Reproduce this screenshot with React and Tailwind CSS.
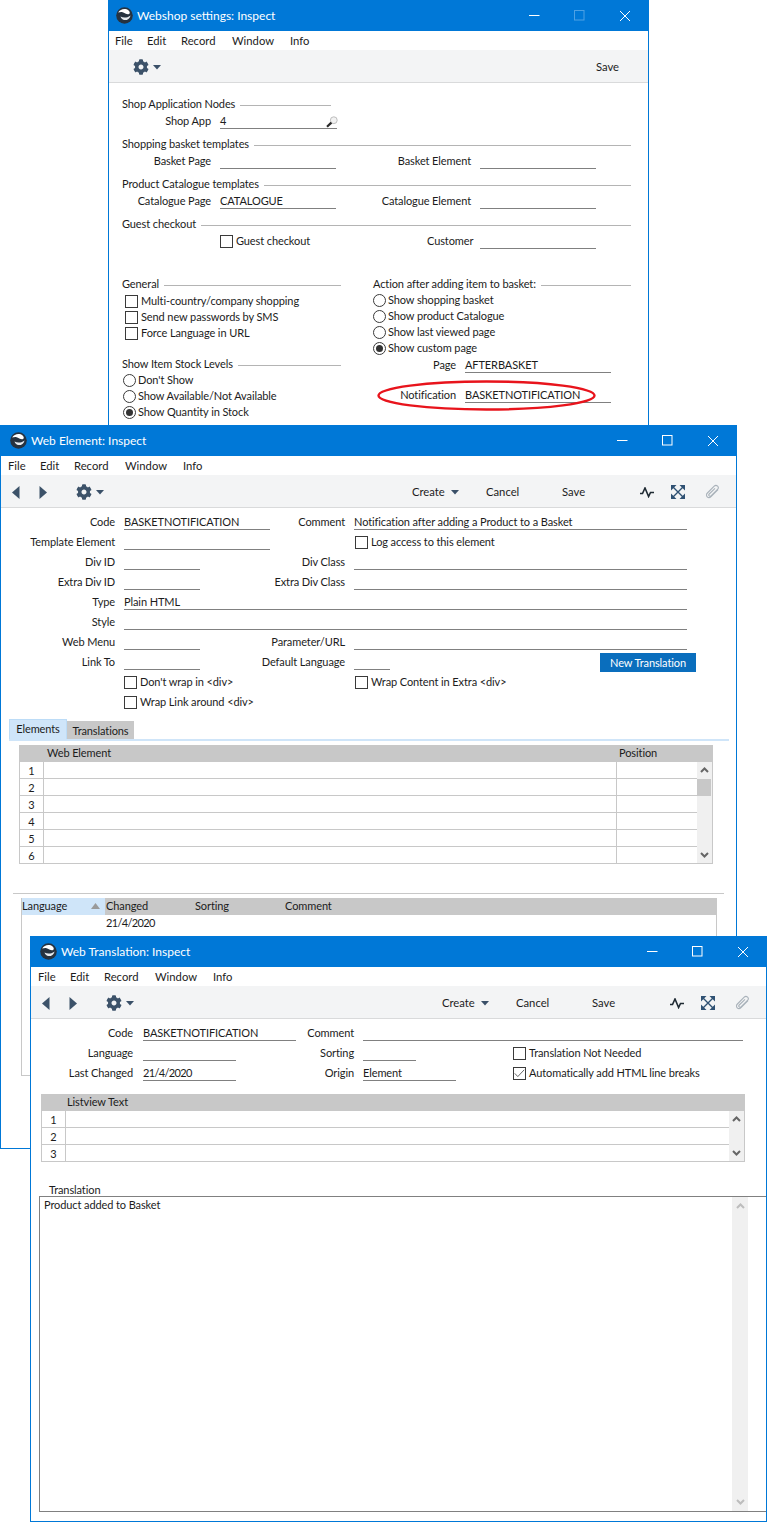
import React from "react";
import { FaCog } from "react-icons/fa";

const FONT = "font-['Lato','Noto_Sans',sans-serif]";

function Logo() {
  return (
    <svg width="17" height="17" viewBox="0 0 17 17" className="shrink-0">
      <circle cx="8.5" cy="8.5" r="8.3" fill="#26323f" />
      <path d="M2.2 5.6C4.2 1.6 9.6 .8 12.6 3.4 14 4.7 14.2 6.2 13 7 11.2 8 8.6 5.6 6.6 5.2 5 4.9 3.4 5.2 2.2 5.6Z" fill="#fff" />
      <path d="M4.5 9.5C7 10.8 10.5 11.4 14.6 8.4 13.8 12 10.6 13.6 8 13 6.4 12.6 5 11.2 4.5 9.5Z" fill="#e6ebef" />
    </svg>
  );
}

function TitleBar({ title, pl, gaps, maxDim }) {
  return (
    <div className={`h-[31px] bg-[#0078d7] flex items-center shrink-0`}>
      <div className={`flex items-center ${pl}`}>
        <Logo />
        <span className="ml-[4px] mt-px text-[12px] tracking-normal text-white leading-none">{title}</span>
      </div>
      <div className={`ml-auto flex items-center ${gaps}`}>
        <svg width="11" height="11" viewBox="0 0 11 11"><path d="M0 5.5H10.5" stroke="#fff" strokeWidth="1" /></svg>
        <svg width="11" height="11" viewBox="0 0 11 11"><rect x=".5" y=".5" width="9.5" height="9.5" fill="none" stroke={maxDim ? "#4ea1e4" : "#fff"} strokeWidth="1" /></svg>
        <svg width="12" height="12" viewBox="0 0 12 12"><path d="M1 1L11 11M11 1L1 11" stroke="#fff" strokeWidth="1" /></svg>
      </div>
    </div>
  );
}

function Menu({ pl }) {
  return (
    <div className={`h-[19px] bg-white flex items-center shrink-0 text-[11.25px] tracking-normal ${pl}`}>
      <span className="w-[32px]">File</span>
      <span className="w-[34px]">Edit</span>
      <span className="w-[51px]">Record</span>
      <span className="w-[58px]">Window</span>
      <span>Info</span>
    </div>
  );
}

function Caret({ color = "#3a5068" }) {
  return (
    <svg width="8" height="5" viewBox="0 0 8 5"><path d="M0 0H8L4 4.5Z" fill={color} /></svg>
  );
}

function Gear() {
  return (
    <div className="flex items-center">
      <FaCog className="text-[#3c5269] w-[16px] h-[16px]" />
      <span className="ml-[4px]"><Caret /></span>
    </div>
  );
}

function Arrows() {
  return (
    <div className="flex items-center">
      <svg width="8" height="13" viewBox="0 0 8 13"><path d="M7.5 0V13L0 6.5Z" fill="#3c5269" /></svg>
      <svg width="8" height="13" viewBox="0 0 8 13" className="ml-[19px]"><path d="M.5 0V13L8 6.5Z" fill="#3c5269" /></svg>
    </div>
  );
}

function ToolRight() {
  return (
    <>
      <div className="flex items-center w-[74px] text-[11.25px] tracking-normal">
        <span>Create</span>
        <span className="ml-[6px]"><Caret /></span>
      </div>
      <span className="w-[76px] text-[11.25px] tracking-normal">Cancel</span>
      <span className="w-[78px] text-[11.25px] tracking-normal">Save</span>
      <svg width="14" height="11" viewBox="0 0 14 11" className="mr-[17px]">
        <path d="M0 6.5H2.5L5 1 8.6 9.5 10.5 5.5H14" fill="none" stroke="#1f2a33" strokeWidth="1.6" />
      </svg>
      <svg width="14" height="14" viewBox="0 0 14 14" className="mr-[20px]">
        <path d="M2 2L12 12M12 2L2 12" stroke="#2f5173" strokeWidth="1.4" />
        <path d="M0 0H5.5L0 5.5ZM14 0V5.5L8.5 0ZM0 14V8.5L5.5 14ZM14 14H8.5L14 8.5Z" fill="#2f5173" />
      </svg>
      <svg width="15" height="16" viewBox="0 0 15 16">
        <path d="M13 5.5L6 12.6C4.8 13.8 3.2 13.8 2.2 12.8 1.2 11.8 1.2 10.2 2.4 9L9.2 2.2C10.2 1.2 11.6 1.2 12.6 2.1 13.5 3 13.5 4.4 12.5 5.4L6 11.8C5.5 12.3 4.7 12.3 4.2 11.8 3.7 11.3 3.7 10.5 4.2 10L10 4.4" fill="none" stroke="#a9b2ba" strokeWidth="1.1" />
      </svg>
    </>
  );
}

function Toolbar({ children }) {
  return (
    <div className="h-[33px] pt-[2px] bg-[#f3f4f5] border-b border-[#d9dadb] flex items-center shrink-0">
      {children}
    </div>
  );
}

function Field({ label, labelW, inputW, value, gap = "ml-[9px]", icon }) {
  return (
    <>
      {label !== undefined && <span className={`${labelW} text-right shrink-0 whitespace-nowrap`}>{label}</span>}
      <span className={`${gap} ${inputW} shrink-0 h-4 leading-4 border-b border-[#808080] whitespace-nowrap relative`}>
        {value}
        {icon}
      </span>
    </>
  );
}

function Box({ checked }) {
  return (
    <span className="w-[13px] h-[13px] border border-[#3a3a3a] bg-white shrink-0 inline-flex items-center justify-center">
      {checked && (
        <svg width="11" height="9" viewBox="0 0 11 9"><path d="M.8 4.4L3.8 7.6 10.2 .8" fill="none" stroke="#666" strokeWidth="1" /></svg>
      )}
    </span>
  );
}

function Radio({ checked }) {
  return (
    <span className="w-[13px] h-[13px] rounded-full border border-[#3a3a3a] bg-white shrink-0 inline-flex items-center justify-center">
      {checked && <span className="w-[7px] h-[7px] rounded-full bg-[#333]" />}
    </span>
  );
}

function Section({ label, lineClass = "flex-1" }) {
  return (
    <div className="h-4 flex items-center whitespace-nowrap">
      <span>{label}</span>
      <span className={`ml-[5px] mt-[3px] h-px bg-[#b4b4b4] ${lineClass}`} />
    </div>
  );
}

function Up({ c = "#666" }) {
  return <svg width="9" height="6" viewBox="0 0 9 6"><path d="M1 5L4.5 1.5 8 5" fill="none" stroke={c} strokeWidth="2" /></svg>;
}
function Down({ c = "#666" }) {
  return <svg width="9" height="6" viewBox="0 0 9 6"><path d="M1 1L4.5 4.5 8 1" fill="none" stroke={c} strokeWidth="2" /></svg>;
}

function Grid({ header, rows, wrap, numW, cols, scrollW, thumb }) {
  return (
    <div className={`${wrap} shrink-0`}>
      <div className="h-[17px] pb-[2px] bg-[#c8c8c8] flex items-center">{header}</div>
      <div className="flex border-r border-b border-[#c8c8c8]">
        <div className="flex-1 min-w-0">
          {rows.map((n, i) => (
            <div key={n} className={`${i < rows.length - 1 ? "h-[17px] border-b" : "h-[16px]"} flex border-[#c8c8c8]`}>
              <span className={`${numW} border-l border-r border-[#c8c8c8] text-center leading-[17px] bg-white`}>{n}</span>
              {cols}
            </div>
          ))}
        </div>
        <div className={`${scrollW} bg-[#f0f0f0] flex flex-col items-center relative`}>
          <span className="absolute top-[5px]"><Up /></span>
          {thumb && <span className="absolute top-[17px] left-0 right-[1px] h-[17px] bg-[#c8c8c8]" />}
          <span className="absolute bottom-[5px]"><Down /></span>
        </div>
      </div>
    </div>
  );
}

function Magnifier() {
  return (
    <svg width="12" height="12" viewBox="0 0 12 12" className="absolute right-[-1px] bottom-[0px]">
      <circle cx="7.8" cy="4.2" r="3.4" fill="#f2f2f2" stroke="#bdbdbd" strokeWidth="1" />
      <path d="M5.4 6.6L1 10.8" stroke="#2a2a2a" strokeWidth="2.2" />
    </svg>
  );
}

function Check({ label, className = "" }) {
  return (
    <div className={`flex items-center ${className}`}>
      <Box />
      <span className="ml-[3px] whitespace-nowrap">{label}</span>
    </div>
  );
}

function Choice({ label, checked }) {
  return (
    <div className="h-4 flex items-center">
      <Radio checked={checked} />
      <span className="ml-[2px] whitespace-nowrap">{label}</span>
    </div>
  );
}

function DateText() {
  return <span className="tracking-[-0.65px]">21/4/2020</span>;
}

function Shop() {
  const row = "h-4 flex items-center";
  return (
    <div className="absolute left-[108px] top-0 w-[541px] h-[440px] border-x border-[#0078d7] bg-white flex flex-col overflow-hidden">
      <TitleBar title="Webshop settings: Inspect" pl="pl-[7px]" gaps="gap-[34px] pr-[17px]" maxDim />
      <Menu pl="pl-[6px]" />
      <Toolbar>
        <div className="ml-[24px]"><Gear /></div>
        <span className="ml-auto mr-[29px] text-[11.25px] tracking-normal">Save</span>
      </Toolbar>
      <div className="pl-[13px] w-[522px] pt-[13px]">
        <Section label="Shop Application Nodes" lineClass="w-[91px]" />
        <div className={`${row} mt-px`}>
          <Field label="Shop App" labelW="w-[89px]" inputW="w-[117px]" value="4" icon={<Magnifier />} />
        </div>
        <div className="mt-[7px]"><Section label="Shopping basket templates" /></div>
        <div className={`${row} mt-px`}>
          <Field label="Basket Page" labelW="w-[89px]" inputW="w-[116px]" />
          <Field label="Basket Element" labelW="w-[135px]" inputW="w-[116px]" />
        </div>
        <div className="mt-[7px]"><Section label="Product Catalogue templates" /></div>
        <div className={`${row} mt-px`}>
          <Field label="Catalogue Page" labelW="w-[89px]" inputW="w-[116px]" value="CATALOGUE" />
          <Field label="Catalogue Element" labelW="w-[135px]" inputW="w-[116px]" />
        </div>
        <div className="mt-[7px]"><Section label="Guest checkout" /></div>
        <div className={`${row} mt-px`}>
          <Check label="Guest checkout" className="ml-[98px] w-[207px]" />
          <span className="w-[44px] text-right whitespace-nowrap">Customer</span>
          <Field inputW="w-[116px]" />
        </div>
        <div className="mt-[27px] flex">
          <div className="w-[219px] mr-[32px]">
            <Section label="General" />
            <div className="mt-px pl-[3px]">
              <Check label="Multi-country/company shopping" className="h-4" />
              <Check label="Send new passwords by SMS" className="h-4" />
              <Check label="Force Language in URL" className="h-4" />
            </div>
            <div className="mt-[15px]"><Section label="Show Item Stock Levels" /></div>
            <div className="pl-px">
              <Choice label="Don't Show" />
              <Choice label="Show Available/Not Available" />
              <Choice label="Show Quantity in Stock" checked />
            </div>
          </div>
          <div className="w-[258px]">
            <Section label="Action after adding item to basket:" />
            <Choice label="Show shopping basket" />
            <Choice label="Show product Catalogue" />
            <Choice label="Show last viewed page" />
            <Choice label="Show custom page" checked />
            <div className={`${row} mt-px`}>
              <Field label="Page" labelW="w-[83px]" inputW="w-[146px]" value="AFTERBASKET" />
            </div>
            <div className={`${row} mt-[14px]`}>
              <Field label="Notification" labelW="w-[83px]" inputW="w-[146px]" value="BASKETNOTIFICATION" />
            </div>
          </div>
        </div>
      </div>
      <svg width="220" height="31" viewBox="0 0 220 31" className="absolute left-[268px] top-[380px]">
        <ellipse cx="109.5" cy="15.5" rx="108" ry="14" fill="none" stroke="#e8141c" strokeWidth="2.4" />
      </svg>
    </div>
  );
}

function Element() {
  const row = "h-5 flex items-center";
  return (
    <div className="absolute left-0 top-[425px] w-[737px] h-[724px] border-x border-b border-[#0078d7] bg-white flex flex-col">
      <TitleBar title="Web Element: Inspect" pl="pl-[9px]" gaps="gap-[34px] pr-[17px]" />
      <Menu pl="pl-[7px]" />
      <Toolbar>
        <div className="ml-[11px]"><Arrows /></div>
        <div className="ml-[29px]"><Gear /></div>
        <div className="ml-auto flex items-center pr-[16px]"><ToolRight /></div>
      </Toolbar>
      <div className="pt-[4px]">
        <div className={row}>
          <Field label="Code" labelW="w-[114px]" inputW="w-[146px]" value="BASKETNOTIFICATION" />
          <Field label="Comment" labelW="w-[75px]" inputW="w-[333px]" value="Notification after adding a Product to a Basket" />
        </div>
        <div className={row}>
          <Field label="Template Element" labelW="w-[114px]" inputW="w-[146px]" />
          <Check label="Log access to this element" className="ml-[85px]" />
        </div>
        <div className={row}>
          <Field label="Div ID" labelW="w-[114px]" inputW="w-[76px]" />
          <Field label="Div Class" labelW="w-[145px]" inputW="w-[333px]" />
        </div>
        <div className={row}>
          <Field label="Extra Div ID" labelW="w-[114px]" inputW="w-[76px]" />
          <Field label="Extra Div Class" labelW="w-[145px]" inputW="w-[333px]" />
        </div>
        <div className={row}>
          <Field label="Type" labelW="w-[114px]" inputW="w-[563px]" value="Plain HTML" />
        </div>
        <div className={row}>
          <Field label="Style" labelW="w-[114px]" inputW="w-[563px]" />
        </div>
        <div className={row}>
          <Field label="Web Menu" labelW="w-[114px]" inputW="w-[76px]" />
          <Field label="Parameter/URL" labelW="w-[145px]" inputW="w-[333px]" />
        </div>
        <div className={row}>
          <Field label="Link To" labelW="w-[114px]" inputW="w-[76px]" />
          <Field label="Default Language" labelW="w-[145px]" inputW="w-[36px]" />
          <span className="ml-[210px] self-end w-[96px] h-[19px] bg-[#0a6ebd] text-white text-center leading-[19px]">New Translation</span>
        </div>
        <div className={row}>
          <Check label="Don't wrap in <div>" className="ml-[123px] w-[231px]" />
          <Check label="Wrap Content in Extra <div>" />
        </div>
        <div className={row}>
          <Check label="Wrap Link around <div>" className="ml-[123px]" />
        </div>
      </div>
      <div className="mt-[7px] ml-[8px] w-[720px]">
        <div className="flex items-end h-[20px]">
          <span className="w-[58px] h-[20px] bg-[#cfe5f9] border-x border-t border-[#bcdcf7] text-center leading-[18px]">Elements</span>
          <span className="w-[67px] h-[18px] bg-[#c8c8c8] text-center leading-[19px]">Translations</span>
        </div>
        <div className="h-[2px] bg-[#cfe5f9]" />
      </div>
      <Grid
        wrap="mt-[4px] ml-[18px] w-[694px]"
        header={<>
          <span className="ml-[28px] w-[572px]">Web Element</span>
          <span>Position</span>
        </>}
        rows={[1, 2, 3, 4, 5, 6]}
        numW="w-[25px]"
        cols={<>
          <span className="flex-1 border-r border-[#c8c8c8]" />
          <span className="w-[80px]" />
        </>}
        scrollW="w-[15px]"
        thumb
      />
      <div className="mt-[29px] ml-[12px] w-[711px] h-px bg-[#c8c8c8]" />
      <div className="mt-[4px] ml-[20px] w-[696px] h-[178px] border-x border-b border-[#c8c8c8]">
        <div className="h-[17px] pb-[2px] flex items-center bg-[#c8c8c8]">
          <div className="w-[83px] h-[17px] pb-[2px] mt-[2px] bg-[#cfe5f9] flex items-center">
            <span>Language</span>
            <svg width="9" height="6" viewBox="0 0 9 6" className="ml-auto mr-[5px]"><path d="M0 6H9L4.5 0Z" fill="#9a9a9a" /></svg>
          </div>
          <span className="ml-[1px] w-[89px]">Changed</span>
          <span className="w-[90px]">Sorting</span>
          <span>Comment</span>
        </div>
        <div className="h-[17px] pl-[84px] leading-[15px]"><DateText /></div>
      </div>
    </div>
  );
}

function Translation() {
  const row = "h-5 flex items-center";
  return (
    <div className="absolute left-[30px] top-[936px] w-[737px] h-[586px] border-x border-b border-[#0078d7] bg-white flex flex-col">
      <TitleBar title="Web Translation: Inspect" pl="pl-[9px]" gaps="gap-[34px] pr-[17px]" />
      <Menu pl="pl-[7px]" />
      <Toolbar>
        <div className="ml-[11px]"><Arrows /></div>
        <div className="ml-[29px]"><Gear /></div>
        <div className="ml-auto flex items-center pr-[16px]"><ToolRight /></div>
      </Toolbar>
      <div className="pt-[4px]">
        <div className={row}>
          <Field label="Code" labelW="w-[102px]" inputW="w-[153px]" gap="ml-[10px]" value="BASKETNOTIFICATION" />
          <Field label="Comment" labelW="w-[58px]" inputW="w-[380px]" />
        </div>
        <div className={row}>
          <Field label="Language" labelW="w-[102px]" inputW="w-[93px]" gap="ml-[10px]" />
          <Field label="Sorting" labelW="w-[118px]" inputW="w-[53px]" />
          <Check label="Translation Not Needed" className="ml-[97px]" />
        </div>
        <div className={row}>
          <Field label="Last Changed" labelW="w-[102px]" inputW="w-[93px]" gap="ml-[10px]" value={<DateText />} />
          <Field label="Origin" labelW="w-[118px]" inputW="w-[93px]" value="Element" />
          <div className="flex items-center ml-[57px]">
            <Box checked />
            <span className="ml-[3px] whitespace-nowrap">Automatically add HTML line breaks</span>
          </div>
        </div>
      </div>
      <Grid
        wrap="mt-[11px] ml-[10px] w-[704px]"
        header={<span className="ml-[26px]">Listview Text</span>}
        rows={[1, 2, 3]}
        numW="w-[25px]"
        cols={<span className="flex-1" />}
        scrollW="w-[15px]"
      />
      <div className="mt-[21px] ml-[18px] h-[13px] leading-[13px]">Translation</div>
      <div className="ml-[8px] h-[316px] border-l border-t border-b border-[#808080] flex">
        <div className="flex-1 pl-[4px]">Product added to Basket</div>
        <div className="w-[16px] mr-[18px] bg-[#f0f0f0] relative flex justify-center">
          <span className="absolute top-[6px]"><Up c="#bdbdbd" /></span>
          <span className="absolute bottom-[6px]"><Down c="#bdbdbd" /></span>
        </div>
      </div>
    </div>
  );
}

export default function App() {
  return (
    <div className={`relative w-[767px] h-[1522px] bg-white overflow-hidden text-[11px] tracking-[-0.1px] leading-4 text-[#1c1c1c] ${FONT}`}>
      <Shop />
      <Element />
      <Translation />
    </div>
  );
}
